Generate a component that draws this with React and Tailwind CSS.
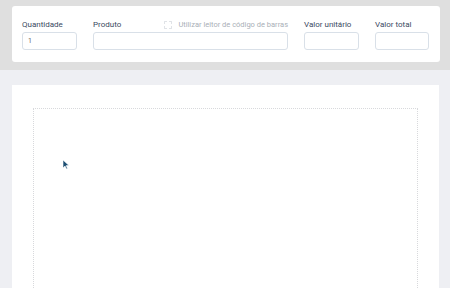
import React from "react";

const Field = ({ label, width, value, children }) => (
  <div className="flex flex-col" style={{ width }}>
    <div className="flex items-center justify-between h-[11px]">
      <span className="text-[8px] leading-[11px] text-[#3a4a5f]">{label}</span>
      {children}
    </div>
    <div className="mt-[2px] h-[18px] rounded-[3px] border border-[#d9e0e8] bg-white px-[5px] flex items-center text-[7px] text-[#666]">
      {value}
    </div>
  </div>
);

export default function App() {
  return (
    <div className="w-[450px] h-[288px] overflow-hidden bg-[#eeeff3]" style={{ fontFamily: "Roboto, 'Liberation Sans', sans-serif" }}>
      {/* top band */}
      <div className="h-[70px] bg-[#dfdfdf] pt-[6px] pl-[12px] pr-[10px]">
        <div className="h-[56px] rounded-[3px] bg-white pl-[10px] pt-[13px] flex gap-[16px]">
          <Field label="Quantidade" width={55} value="1" />
          <Field label="Produto" width={195}>
            <span className="flex items-center gap-[6px] text-[7.5px] leading-[11px] text-[#a9afb7]">
              <span className="w-[8px] h-[8px] border border-dashed border-[#e0e3e7] rounded-[1px]" />
              Utilizar leitor de código de barras
            </span>
          </Field>
          <Field label="Valor unitário" width={55} />
          <Field label="Valor total" width={54} />
        </div>
      </div>
      {/* lower area */}
      <div className="pt-[15px] pl-[12px] pr-[11px]">
        <div className="relative h-[220px] bg-white pt-[23px] pl-[21px] pr-[21px]">
          <div className="h-[200px] border border-dotted border-[#d8d9dc] border-b-0" />
          <svg className="absolute left-[50px] top-[74px]" width="8" height="11" viewBox="0 0 8 11">
            <path d="M1 1 L1 9 L3 7 L4.5 10 L5.5 9.5 L4.2 6.6 L7 6.6 Z" fill="#1d4f73" stroke="#fff" strokeWidth="0.6" />
          </svg>
        </div>
      </div>
    </div>
  );
}
